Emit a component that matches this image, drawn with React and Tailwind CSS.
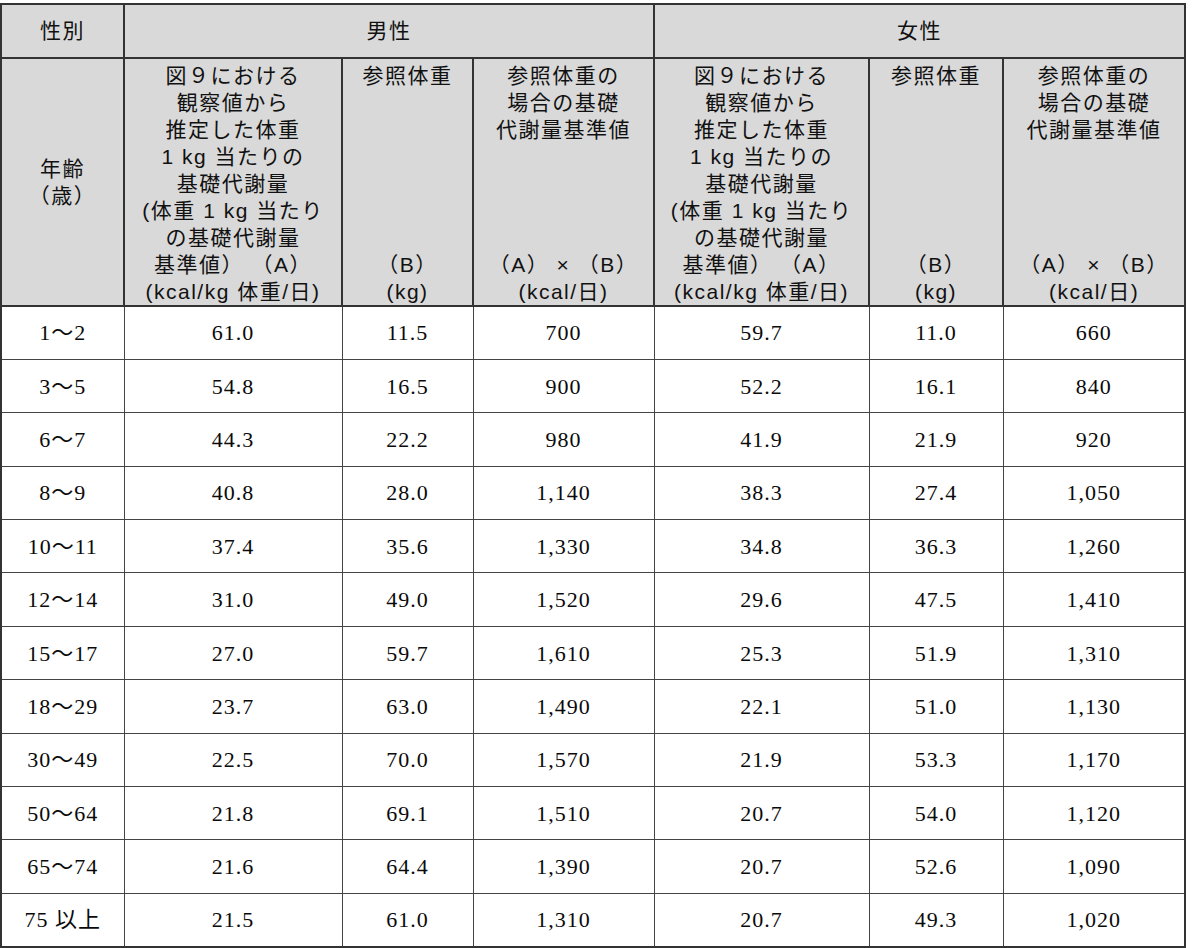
const SANS = { fontFamily: '"Liberation Sans", "Noto Sans CJK JP", sans-serif' };

const rows = [
  ["1～2", "61.0", "11.5", "700", "59.7", "11.0", "660"],
  ["3～5", "54.8", "16.5", "900", "52.2", "16.1", "840"],
  ["6～7", "44.3", "22.2", "980", "41.9", "21.9", "920"],
  ["8～9", "40.8", "28.0", "1,140", "38.3", "27.4", "1,050"],
  ["10～11", "37.4", "35.6", "1,330", "34.8", "36.3", "1,260"],
  ["12～14", "31.0", "49.0", "1,520", "29.6", "47.5", "1,410"],
  ["15～17", "27.0", "59.7", "1,610", "25.3", "51.9", "1,310"],
  ["18～29", "23.7", "63.0", "1,490", "22.1", "51.0", "1,130"],
  ["30～49", "22.5", "70.0", "1,570", "21.9", "53.3", "1,170"],
  ["50～64", "21.8", "69.1", "1,510", "20.7", "54.0", "1,120"],
  ["65～74", "21.6", "64.4", "1,390", "20.7", "52.6", "1,090"],
  ["75 以上", "21.5", "61.0", "1,310", "20.7", "49.3", "1,020"],
];

// 9 line slots per header column, blanks keep the bottom lines aligned
const colA = [
  "図９における",
  "観察値から",
  "推定した体重",
  "1 kg 当たりの",
  "基礎代謝量",
  "(体重 1 kg 当たり",
  "の基礎代謝量",
  "基準値） （A）",
  "(kcal/kg 体重/日)",
];
const colB = ["参照体重", "", "", "", "", "", "", "（B）", "(kg)"];
const colC = ["参照体重の", "場合の基礎", "代謝量基準値", "", "", "", "", "（A） × （B）", "(kcal/日)"];

function Lines({ lines }) {
  return (
    <div className="flex flex-col pt-[3px]">
      {lines.map((l, i) => (
        <div key={i} className="h-[27px] leading-[27px] whitespace-nowrap">
          {l || "\u00a0"}
        </div>
      ))}
    </div>
  );
}

export default function App() {
  const th = "border-2 border-[#333] bg-[#d9d9d9] text-[#111] text-[21px] tracking-[1.5px] font-normal text-center";
  const td = "border border-[#444] text-center text-[22px] text-[#0a0a0a] tracking-[1px] h-[53.4px] p-0";
  return (
    <div className="bg-white w-[1192px] h-[948px] pt-[3px]">
      <table className="table-fixed border-collapse w-[1184px] border-2 border-[#333]">
        <colgroup>
          <col className="w-[123px]" />
          <col className="w-[218px]" />
          <col className="w-[131px]" />
          <col className="w-[181px]" />
          <col className="w-[215px]" />
          <col className="w-[134px]" />
          <col className="w-[182px]" />
        </colgroup>
        <thead style={SANS}>
          <tr>
            <th className={`${th} h-[54px] border-b-2`}>性別</th>
            <th colSpan={3} className={`${th} h-[54px]`}>男性</th>
            <th colSpan={3} className={`${th} h-[54px]`}>女性</th>
          </tr>
          <tr>
            <th className={`${th} h-[248px] align-middle leading-[27px]`}>
              <div>年齢</div>
              <div>（歳）</div>
            </th>
            <th className={`${th} h-[248px] align-top p-0 border-r border-r-[#666]`}><Lines lines={colA} /></th>
            <th className={`${th} h-[248px] align-top p-0 border-r border-r-[#666]`}><Lines lines={colB} /></th>
            <th className={`${th} h-[248px] align-top p-0`}><Lines lines={colC} /></th>
            <th className={`${th} h-[248px] align-top p-0 border-r border-r-[#666]`}><Lines lines={colA} /></th>
            <th className={`${th} h-[248px] align-top p-0 border-r border-r-[#666]`}><Lines lines={colB} /></th>
            <th className={`${th} h-[248px] align-top p-0`}><Lines lines={colC} /></th>
          </tr>
        </thead>
        <tbody style={{ fontFamily: '"Liberation Serif", "Noto Sans CJK JP", serif' }}>
          {rows.map((r, i) => (
            <tr key={i}>
              {r.map((c, j) => (
                <td key={j} className={td}>{c}</td>
              ))}
            </tr>
          ))}
        </tbody>
      </table>
    </div>
  );
}
